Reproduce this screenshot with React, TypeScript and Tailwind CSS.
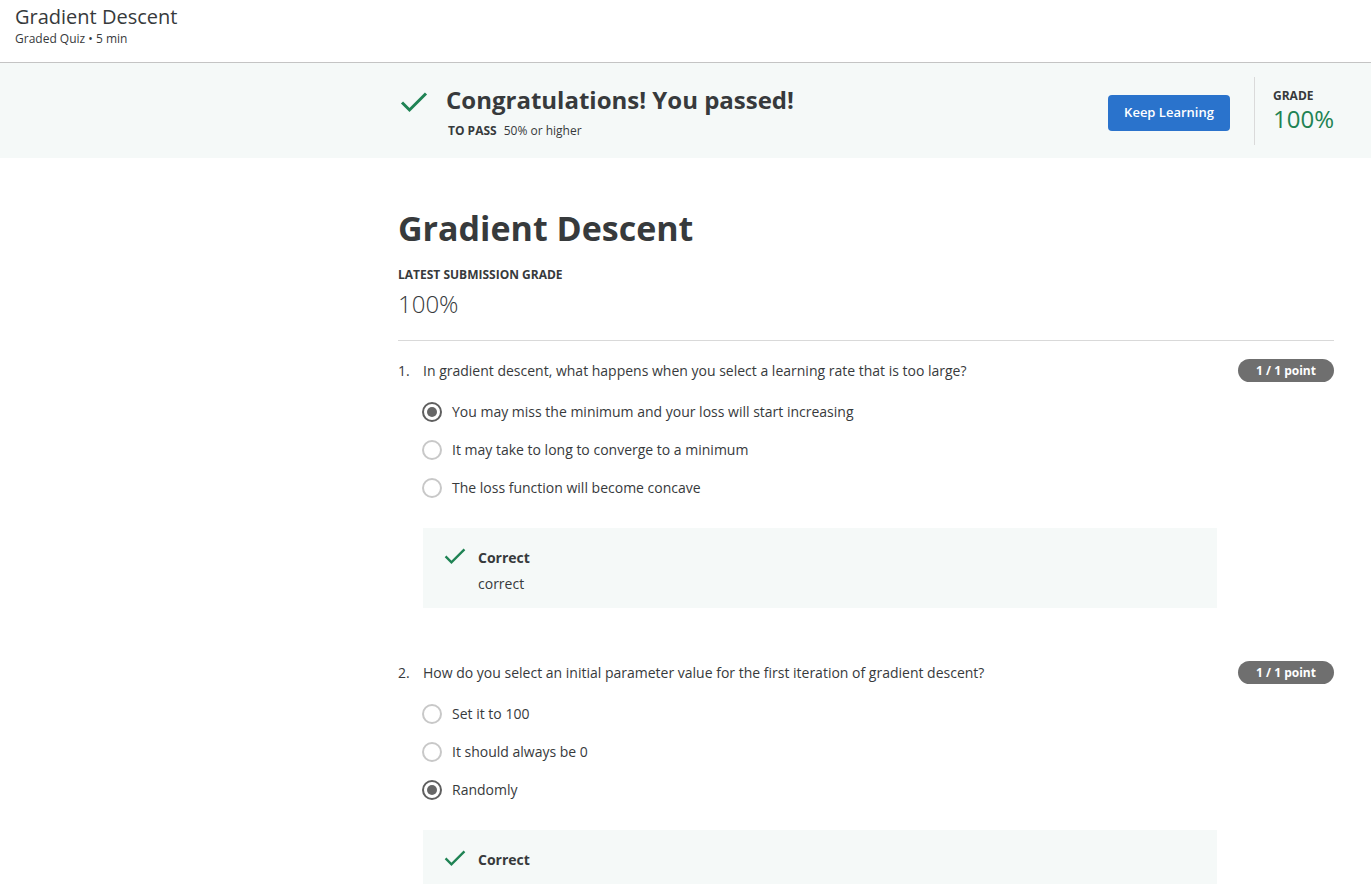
// Graded quiz result page: header, pass banner, question list with feedback.

const FONT = { fontFamily: '"Open Sans", "Noto Sans", sans-serif' };

type Question = {
  num: number;
  text: string;
  options: string[];
  selected: number;
  feedback?: string;
};

const QUESTIONS: Question[] = [
  {
    num: 1,
    text: "In gradient descent, what happens when you select a learning rate that is too large?",
    options: [
      "You may miss the minimum and your loss will start increasing",
      "It may take to long to converge to a minimum",
      "The loss function will become concave",
    ],
    selected: 0,
    feedback: "correct",
  },
  {
    num: 2,
    text: "How do you select an initial parameter value for the first iteration of gradient descent?",
    options: ["Set it to 100", "It should always be 0", "Randomly"],
    selected: 2,
  },
];

function Check({ className }: { className?: string }) {
  return (
    <svg viewBox="0 0 28 22" className={className} fill="none">
      <path d="M2 11.5 L9.5 19 L26 2.5" stroke="#1f8354" strokeWidth="3" />
    </svg>
  );
}

function Radio({ checked }: { checked: boolean }) {
  return checked ? (
    <span className="w-5 h-5 rounded-full border-2 border-[#5f5f5f] flex items-center justify-center shrink-0">
      <span className="w-[10px] h-[10px] rounded-full bg-[#666666]" />
    </span>
  ) : (
    <span className="w-5 h-5 rounded-full border-2 border-[#c8c8c8] shrink-0" />
  );
}

function QuestionBlock({ q }: { q: Question }) {
  return (
    <div className="mb-[53px]">
      <div className="flex items-center h-[23px]">
        <span className="w-[25px] text-sm">{q.num}.</span>
        <span className="text-sm">{q.text}</span>
        <span className="ml-auto w-[96px] h-[23px] rounded-full bg-[#6f6f6f] text-white text-xs font-bold flex items-center justify-center">
          1 / 1 point
        </span>
      </div>

      <div className="ml-6 mt-[20px] flex flex-col gap-[18px]">
        {q.options.map((opt, i) => (
          <label key={opt} className="flex items-center gap-[10px] h-[20px]">
            <Radio checked={i === q.selected} />
            <span className="text-sm">{opt}</span>
          </label>
        ))}
      </div>

      {/* Feedback */}
      <div className="ml-[25px] mt-[30px] w-[794px] bg-[#f5f9f8] pl-[21px] pt-[19px] pb-[13px]">
        <div className="flex items-start">
          <Check className="w-[22px] h-[18px] mt-0" />
          <div className="ml-[12px]">
            <p className="text-sm font-bold leading-[22px]">Correct</p>
            {q.feedback && <p className="text-sm mt-[4px] leading-[22px]">{q.feedback}</p>}
          </div>
        </div>
      </div>
    </div>
  );
}

export default function App() {
  return (
    <div style={FONT} className="min-h-screen bg-white text-[#373a3c]">
      {/* Top header */}
      <header className="h-[63px] border-b border-[#c4c4c4] pl-[15px] pt-[3px]">
        <h2 className="text-xl leading-7">Gradient Descent</h2>
        <p className="text-xs leading-4">Graded Quiz • 5 min</p>
      </header>

      {/* Pass banner */}
      <section className="h-[95px] bg-[#f5f9f8] pl-[398px] pr-[37px] flex items-center">
        <div className="flex items-start mt-[2px]">
          <Check className="w-[28px] h-[22px] mt-[7px] ml-[2px]" />
          <div className="ml-[18px]">
            <h3 className="text-2xl font-bold leading-8">Congratulations! You passed!</h3>
            <p className="text-xs mt-[6px] leading-[18px] pl-[2px]">
              <span className="font-bold">TO PASS</span>
              <span className="ml-[7px]">50% or higher</span>
            </p>
          </div>
        </div>
        <button className="ml-auto w-[122px] h-[36px] rounded bg-[#2a73cc] text-white text-[13px] font-semibold mt-[5px]">
          Keep Learning
        </button>
        <div className="w-px h-[68px] bg-[#dadada] ml-[24px] mr-[18px] mt-[1px]" />
        <div className="w-[61px] mt-[-1px]">
          <p className="text-xs font-bold leading-4">GRADE</p>
          <p className="text-2xl text-[#1f8354] leading-7 mt-[1px]">100%</p>
        </div>
      </section>

      {/* Main content */}
      <main className="pl-[398px] pr-[37px] pt-[48px]">
        <h1 className="text-[34px] font-bold leading-[44px]">Gradient Descent</h1>
        <p className="text-xs font-bold mt-[17px] leading-4">LATEST SUBMISSION GRADE</p>
        <p className="text-2xl font-light mt-[5px] leading-8">100%</p>
        <div className="h-px bg-[#d9d9d9] mt-[20px]" />

        <div className="pt-[18px]">
          {QUESTIONS.map((q) => (
            <QuestionBlock key={q.num} q={q} />
          ))}
        </div>
      </main>
    </div>
  );
}
